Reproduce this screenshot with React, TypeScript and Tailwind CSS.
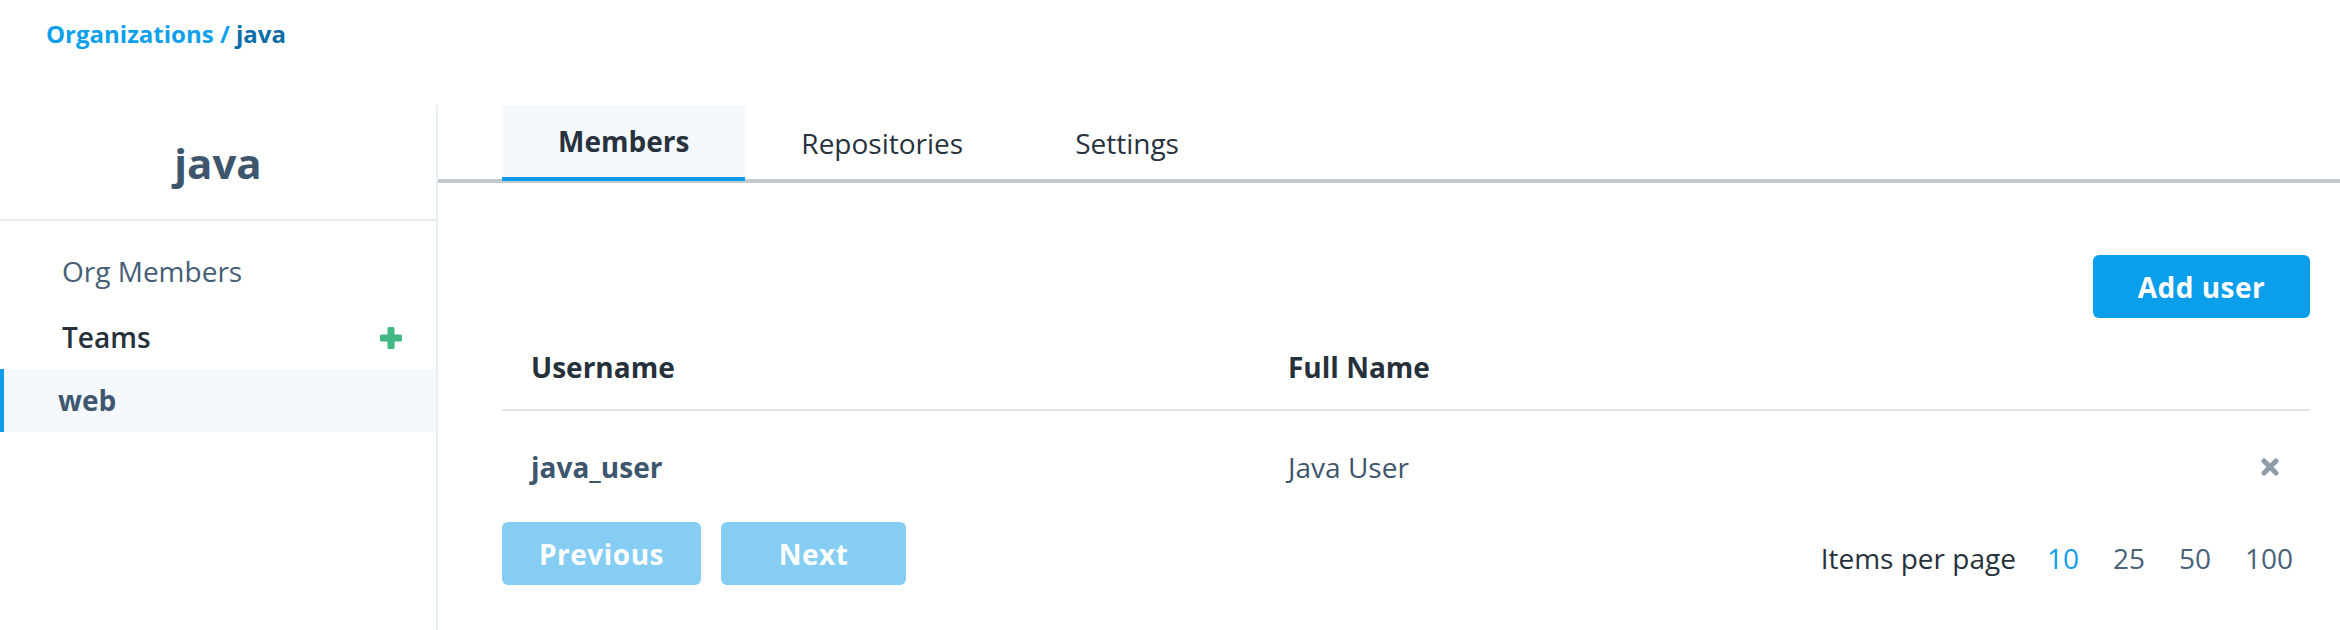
import React from "react";

function PlusIcon() {
  return (
    <svg width="22" height="22" viewBox="0 0 22 22" aria-hidden="true">
      <rect x="7.5" y="0" width="7" height="22" rx="1.5" fill="#43b883" />
      <rect x="0" y="7.5" width="22" height="7" rx="1.5" fill="#43b883" />
    </svg>
  );
}

function CloseIcon() {
  return (
    <svg width="20" height="18" viewBox="0 0 20 18" aria-hidden="true">
      <path d="M4 3 L16 15 M16 3 L4 15" stroke="#8e9caa" strokeWidth="5" strokeLinecap="round" />
    </svg>
  );
}

export default function App() {
  return (
    <div className="w-[2340px] h-[630px] bg-white overflow-hidden font-['Open_Sans',sans-serif]">
      <div className="h-[105px] pl-[46px] pt-[16px] text-[24px] leading-[36px] font-bold">
        <span className="text-[#0ea0ea]">Organizations / </span>
        <span className="text-[#0b6ea8]">java</span>
      </div>
      <div className="flex h-[525px]">
        <aside className="w-[438px] shrink-0 border-r-2 border-[#e8edf2]">
          <div className="h-[116px] pt-[33px] border-b-2 border-[#e6ebf0] text-center text-[42px] leading-[50px] font-bold text-[#3e566d]">
            java
          </div>
          <div className="mt-[19px] h-[66px] pl-[62px] text-[28px] leading-[63px] text-[#465e76]">
            Org Members
          </div>
          <div className="h-[63px] pl-[62px] pr-[34px] flex items-center justify-between">
            <span className="text-[28px] leading-[63px] font-semibold text-[#26313b]">Teams</span>
            <PlusIcon />
          </div>
          <div className="h-[63px] border-l-4 border-[#0d9de8] bg-[#f5f9fd] pl-[54px] text-[28px] leading-[63px] font-bold text-[#3f576e]">
            web
          </div>
        </aside>
        <main className="flex-1">
          <div className="h-[78px] border-b-4 border-[#c2cad0] pl-[64px] flex">
            <div className="relative h-[76px] px-[56px] bg-[#f5f9fe] border-b-4 border-[#0d9de8] flex items-center text-[28px] font-bold text-[#27323d]">
              Members
            </div>
            <div className="h-[76px] px-[56px] flex items-center text-[28px] text-[#27323d]">
              Repositories
            </div>
            <div className="h-[76px] px-[56px] flex items-center text-[28px] text-[#27323d]">
              Settings
            </div>
          </div>
          <div className="pl-[64px] pr-[30px]">
            <div className="flex justify-end mt-[72px]">
              <button className="w-[217px] h-[63px] rounded-[6px] bg-[#0b9eeb] text-white text-[28px] font-bold tracking-[0.5px]">
                Add user
              </button>
            </div>
            <div className="grid grid-cols-[757px_1fr_auto] border-b-2 border-[#e1e5e9] pt-[29px] pb-[22px] text-[28px] leading-[40px] font-bold text-[#26313c]">
              <div className="pl-[29px]">Username</div>
              <div className="pl-[29px]">Full Name</div>
              <div />
            </div>
            <div className="grid grid-cols-[757px_1fr_auto] h-[111px] items-center text-[28px]">
              <div className="pl-[29px] font-bold text-[#3e566d]">java_user</div>
              <div className="pl-[29px] text-[#3e566d]">Java User</div>
              <div className="pr-[30px] flex items-center"><CloseIcon /></div>
            </div>
            <div className="flex items-center justify-between">
              <div className="flex gap-[20px]">
                <button className="w-[199px] h-[63px] rounded-[6px] bg-[#86cdf4] text-white text-[28px] font-bold tracking-[0.5px]">
                  Previous
                </button>
                <button className="w-[185px] h-[63px] rounded-[6px] bg-[#86cdf4] text-white text-[28px] font-bold tracking-[0.5px]">
                  Next
                </button>
              </div>
              <div className="flex items-center text-[28px] mt-[8px]">
                <span className="text-[#27323d] mr-[14px]">Items per page</span>
                <span className="px-[17px] text-[#139deb]">10</span>
                <span className="px-[17px] text-[#4a627a]">25</span>
                <span className="px-[17px] text-[#4a627a]">50</span>
                <span className="px-[17px] text-[#4a627a]">100</span>
              </div>
            </div>
          </div>
        </main>
      </div>
    </div>
  );
}
